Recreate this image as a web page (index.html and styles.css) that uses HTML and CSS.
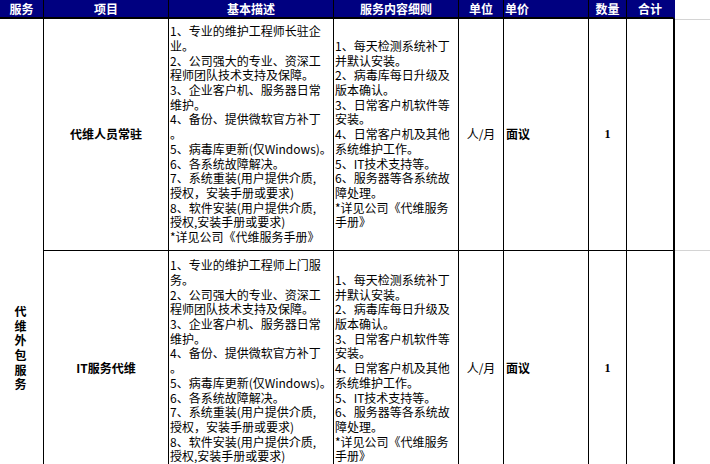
FILE: index.html
```html
<!DOCTYPE html>
<html lang="zh-CN">
<head>
<meta charset="utf-8">
<title>代维外包服务报价</title>
<link rel="stylesheet" href="styles.css">
</head>
<body>
<div class="sheet">
  <div class="h">服务</div>
  <div class="h">项目</div>
  <div class="h">基本描述</div>
  <div class="h">服务内容细则</div>
  <div class="h">单位</div>
  <div class="h h-left">单价</div>
  <div class="h">数量</div>
  <div class="h h-last">合计</div>
  <div class="grid-gap grid-gap-head"></div>

  <div class="svc">代<br>维<br>外<br>包<br>服<br>务</div>

  <div class="c item">代维人员常驻</div>
  <div class="c text">1、专业的维护工程师长驻企<br>业。<br>2、公司强大的专业、资深工<br>程师团队技术支持及保障。<br>3、企业客户机、服务器日常<br>维护。<br>4、备份、提供微软官方补丁<br>。<br>5、病毒库更新(仅Windows)。<br>6、各系统故障解决。<br>7、系统重装(用户提供介质,<br>授权，安装手册或要求)<br>8、软件安装(用户提供介质,<br>授权,安装手册或要求)<br>*详见公司《代维服务手册》</div>
  <div class="c text">1、每天检测系统补丁<br>并默认安装。<br>2、病毒库每日升级及<br>版本确认。<br>3、日常客户机软件等<br>安装。<br>4、日常客户机及其他<br>系统维护工作。<br>5、IT技术支持等。<br>6、服务器等各系统故<br>障处理。<br>*详见公司《代维服务<br>手册》</div>
  <div class="c unit">人/月</div>
  <div class="c price">面议</div>
  <div class="c qty">1</div>
  <div class="c total"></div>
  <div class="grid-gap"></div>

  <div class="c item">IT服务代维</div>
  <div class="c text">1、专业的维护工程师上门服<br>务。<br>2、公司强大的专业、资深工<br>程师团队技术支持及保障。<br>3、企业客户机、服务器日常<br>维护。<br>4、备份、提供微软官方补丁<br>。<br>5、病毒库更新(仅Windows)。<br>6、各系统故障解决。<br>7、系统重装(用户提供介质,<br>授权，安装手册或要求)<br>8、软件安装(用户提供介质,<br>授权,安装手册或要求)<br>*详见公司《代维服务手册》</div>
  <div class="c text">1、每天检测系统补丁<br>并默认安装。<br>2、病毒库每日升级及<br>版本确认。<br>3、日常客户机软件等<br>安装。<br>4、日常客户机及其他<br>系统维护工作。<br>5、IT技术支持等。<br>6、服务器等各系统故<br>障处理。<br>*详见公司《代维服务<br>手册》</div>
  <div class="c unit">人/月</div>
  <div class="c price">面议</div>
  <div class="c qty">1</div>
  <div class="c total"></div>
  <div class="grid-gap"></div>

  <div class="c item"></div>
  <div class="c text"></div>
  <div class="c text"></div>
  <div class="c unit"></div>
  <div class="c price"></div>
  <div class="c qty"></div>
  <div class="c total"></div>
  <div class="grid-gap"></div>
</div>
</body>
</html>
```

FILE: styles.css
```css
html, body {
  margin: 0;
  padding: 0;
  background: #ffffff;
  overflow: hidden;
}

body {
  font-family: "Noto Sans CJK SC", "Noto Sans", sans-serif;
  font-size: 12px;
  line-height: 14.7px;
  color: #000000;
}

.sheet {
  display: grid;
  grid-template-columns: 44px 125px 165px 125px 45px 85px 38px 48px 1fr;
  grid-template-rows: 19px 232px 236px 190px;
  width: 710px;
}

.h {
  box-sizing: border-box;
  background: #000080;
  color: #ffffff;
  font-weight: 700;
  border-right: 1px solid #000000;
  border-bottom: 2px solid #000000;
  display: flex;
  align-items: center;
  justify-content: center;
  white-space: nowrap;
  line-height: 17px;
}

.h-left {
  justify-content: flex-start;
  padding-left: 1px;
}

.h-last {
  border-right: 2px solid #000080;
}

.grid-gap {
  box-sizing: border-box;
  border-bottom: 1px solid #d4d4d4;
}

.grid-gap-head {
  border-bottom: 1px solid #d4d4d4;
  height: 20px;
}

.svc {
  grid-column: 1;
  grid-row: 2 / span 3;
  box-sizing: border-box;
  border-right: 1px solid #000000;
  display: flex;
  align-items: center;
  justify-content: center;
  text-align: center;
  font-weight: 700;
  padding-right: 2px;
}

.c {
  box-sizing: border-box;
  border-right: 1px solid #000000;
  border-bottom: 1px solid #000000;
  display: flex;
  align-items: center;
  white-space: nowrap;
  overflow: hidden;
}

.item {
  justify-content: center;
  font-weight: 700;
}

.text {
  padding-left: 1px;
}

.unit {
  justify-content: center;
}

.price {
  font-weight: 700;
  padding-left: 2px;
}

.qty {
  justify-content: center;
  font-family: "Liberation Serif", serif;
  font-weight: 700;
}

.total {
  border-right: 2px solid #000000;
}
```
